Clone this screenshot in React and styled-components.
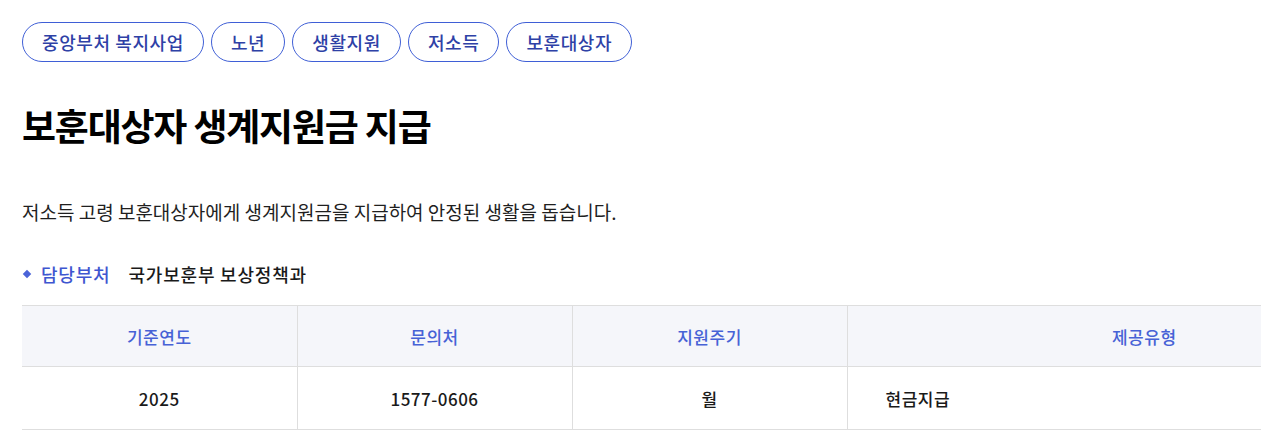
import React from 'react';
import styled, { createGlobalStyle } from 'styled-components';

const GlobalStyle = createGlobalStyle`
  body {
    margin: 0;
    background: #ffffff;
    font-family: "Noto Sans CJK KR", "Noto Sans", sans-serif;
    color: #1a1a1a;
    overflow: hidden;
  }
`;

const Page = styled.div`
  padding: 22px 0 0 22px;
  width: 1441px;
`;

const TagList = styled.ul`
  display: flex;
  gap: 7px;
  margin: 0;
  padding: 0;
  list-style: none;
`;

const Tag = styled.li`
  display: flex;
  align-items: center;
  height: 40px;
  box-sizing: border-box;
  padding: 0 19px;
  border: 1px solid #3f5fd6;
  border-radius: 20px;
  font-size: 18px;
  font-weight: 500;
  color: #2e41a6;
  letter-spacing: 0.6px;
`;

const Title = styled.h1`
  margin: 36px 0 0;
  font-size: 37px;
  line-height: 54px;
  font-weight: 700;
  letter-spacing: -1.2px;
  color: #000000;
`;

const Desc = styled.p`
  margin: 46px 0 0;
  font-size: 19px;
  line-height: 28px;
  letter-spacing: 0;
  color: #1f1f1f;
`;

const DeptRow = styled.div`
  display: flex;
  align-items: center;
  margin-top: 34px;
  height: 28px;
  font-size: 18px;
  font-weight: 500;
  letter-spacing: 0.8px;
`;

const Bullet = styled.span`
  width: 6px;
  height: 6px;
  margin: 0 11px 0 2px;
  background: #4a63d8;
  transform: rotate(45deg);
`;

const DeptLabel = styled.span`
  color: #3e56d0;
  margin-right: 18px;
`;

const DeptName = styled.span`
  color: #1a1a1a;
`;

const Table = styled.table`
  margin-top: 17px;
  width: 1419px;
  table-layout: fixed;
  border-collapse: collapse;
  border-top: 1px solid #dedede;
  border-bottom: 1px solid #dedede;
`;

const Th = styled.th`
  height: 60px;
  background: #f5f6fa;
  border-right: 1px solid #dedede;
  border-bottom: 1px solid #dedede;
  font-size: 17px;
  font-weight: 500;
  color: #4762d6;
  letter-spacing: 0.5px;
  text-align: center;
  padding: 0;
  &:last-child { border-right: none; }
`;

const Td = styled.td`
  height: 62px;
  border-right: 1px solid #dedede;
  font-size: 17px;
  font-weight: 500;
  color: #1a1a1a;
  text-align: ${p => (p.$left ? 'left' : 'center')};
  padding: ${p => (p.$left ? '0 0 0 38px' : '0')};
  letter-spacing: 0.5px;
  &:last-child { border-right: none; }
`;

const tags = ['중앙부처 복지사업', '노년', '생활지원', '저소득', '보훈대상자'];

export default function App() {
  return (
    <Page>
      <GlobalStyle />
      <TagList>
        {tags.map(t => (
          <Tag key={t}>{t}</Tag>
        ))}
      </TagList>
      <Title>보훈대상자 생계지원금 지급</Title>
      <Desc>저소득 고령 보훈대상자에게 생계지원금을 지급하여 안정된 생활을 돕습니다.</Desc>
      <DeptRow>
        <Bullet />
        <DeptLabel>담당부처</DeptLabel>
        <DeptName>국가보훈부 보상정책과</DeptName>
      </DeptRow>
      <Table>
        <colgroup>
          <col style={{ width: 275 }} />
          <col style={{ width: 275 }} />
          <col style={{ width: 275 }} />
          <col />
        </colgroup>
        <thead>
          <tr>
            <Th>기준연도</Th>
            <Th>문의처</Th>
            <Th>지원주기</Th>
            <Th>제공유형</Th>
          </tr>
        </thead>
        <tbody>
          <tr>
            <Td>2025</Td>
            <Td>1577-0606</Td>
            <Td>월</Td>
            <Td $left>현금지급</Td>
          </tr>
        </tbody>
      </Table>
    </Page>
  );
}
